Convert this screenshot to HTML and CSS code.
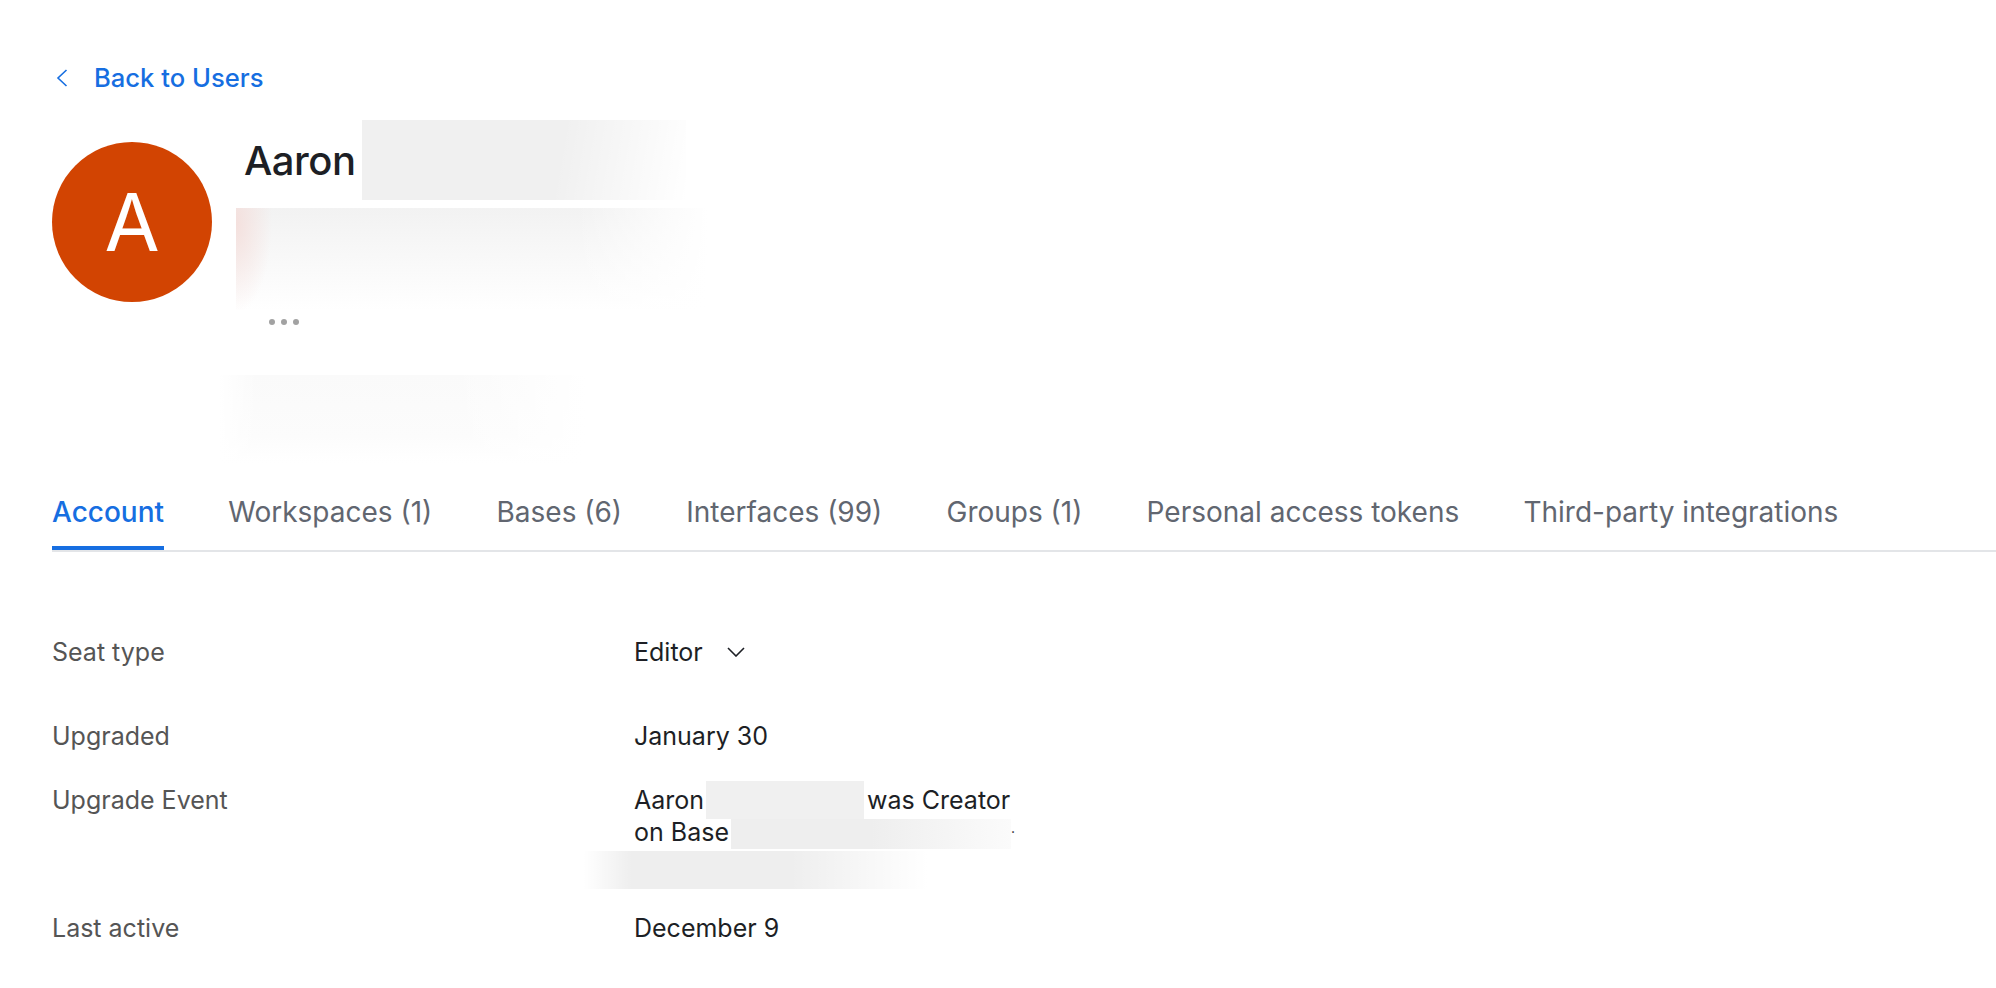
FILE: index.html
```html
<!DOCTYPE html>
<html lang="en">
<head>
<meta charset="utf-8">
<title>Aaron - Users</title>
<link rel="stylesheet" href="styles.css">
</head>
<body>
<main class="page">
  <a class="back" href="#">
    <svg class="back-icon" viewBox="0 0 12 18" width="12" height="18" aria-hidden="true"><path d="M10.5 1 2 9l8.5 8" fill="none" stroke="currentColor" stroke-width="1.6"/></svg>
    <span>Back to Users</span>
  </a>
  <header class="profile">
    <div class="avatar">A</div>
    <div class="info">
      <div class="name-row">
        <h1 class="name">Aaron</h1>
        <div class="mask mask-surname"></div>
      </div>
      <div class="mask mask-details"></div>
      <div class="dots"><i></i><i></i><i></i></div>
    </div>
  </header>
  <div class="mask mask-meta"></div>
  <nav class="tabs">
    <a class="tab active" href="#">Account</a>
    <a class="tab" href="#">Workspaces (1)</a>
    <a class="tab" href="#">Bases (6)</a>
    <a class="tab" href="#">Interfaces (99)</a>
    <a class="tab" href="#">Groups (1)</a>
    <a class="tab" href="#">Personal access tokens</a>
    <a class="tab" href="#">Third-party integrations</a>
  </nav>
  <section class="details">
    <div class="row row-seat">
      <div class="label">Seat type</div>
      <div class="value seat">Editor
        <svg class="seat-icon" viewBox="0 0 18 10" width="18" height="10" aria-hidden="true"><path d="M1 1l8 8 8-8" fill="none" stroke="currentColor" stroke-width="1.6"/></svg>
      </div>
    </div>
    <div class="row row-upgraded">
      <div class="label">Upgraded</div>
      <div class="value">January 30</div>
    </div>
    <div class="row row-event">
      <div class="label">Upgrade Event</div>
      <div class="value event">
        <div class="event-line">Aaron<span class="mask mask-person"></span>was Creator</div>
        <div class="event-line">on Base<span class="mask mask-base"></span><span class="event-dot">.</span></div>
        <div class="mask mask-extra"></div>
      </div>
    </div>
    <div class="row">
      <div class="label">Last active</div>
      <div class="value">December 9</div>
    </div>
  </section>
</main>
</body>
</html>
```

FILE: styles.css
```css
* { box-sizing: border-box; }
html, body { margin: 0; padding: 0; background: #fff; }
body {
  font-family: Inter, "Liberation Sans", sans-serif;
  color: #1d1f25;
  height: 988px;
  overflow: hidden;
}
.page { padding: 62px 0 0 52px; }

.back {
  display: flex;
  align-items: center;
  height: 32px;
  color: #166ee1;
  font-size: 25.6px;
  font-weight: 500;
  line-height: 32px;
  text-decoration: none;
}
.back-icon { margin-left: 4px; margin-right: 26px; flex: none; }

.profile { display: flex; align-items: flex-start; margin-top: 26px; height: 222px; }
.avatar {
  width: 160px;
  height: 160px;
  margin-top: 22px;
  border-radius: 50%;
  background: #d24402;
  color: #fff;
  font-size: 80px;
  font-weight: 400;
  line-height: 160px;
  text-align: center;
  flex: none;
}
.info { margin-left: 24px; }
.name-row { display: flex; height: 80px; }
.name {
  margin: 0;
  padding: 1px 0 0 8px;
  font-size: 40px;
  font-weight: 500;
  line-height: 80px;
  letter-spacing: -0.5px;
  width: 126px;
}
.mask-surname {
  width: 324px;
  height: 80px;
  background:
    linear-gradient(100deg, rgba(255,255,255,0) 60%, #fff 100%),
    #f0f0f0;
}
.mask-details {
  width: 472px;
  height: 102px;
  margin-top: 8px;
  background:
    radial-gradient(ellipse 36px 90px at 0 15%, rgba(244,222,219,.9) 0, rgba(255,255,255,0) 100%),
    linear-gradient(90deg, rgba(255,255,255,0) 72%, #fff 100%),
    linear-gradient(180deg, #f2f2f2 0, #fdfdfd 85%, #fff 100%);
}
.dots { display: flex; gap: 6px; margin: 9px 0 0 33px; }
.dots i { width: 6px; height: 6px; border-radius: 50%; background: #a2a2a2; }

.mask-meta {
  width: 386px;
  height: 88px;
  margin: 33px 0 0 167px;
  background:
    linear-gradient(90deg, #fff 0, rgba(255,255,255,0) 10%, rgba(255,255,255,0) 60%, #fff 95%),
    linear-gradient(180deg, #fafafa 0, #fcfcfc 70%, #fff 100%);
}

.tabs {
  display: flex;
  gap: 64.2px;
  height: 89px;
  border-bottom: 2px solid #e3e5e8;
}
.tab {
  height: 87px;
  padding-top: 31px;
  color: #616670;
  font-size: 28px;
  font-weight: 400;
  line-height: 36px;
  text-decoration: none;
  white-space: nowrap;
}
.tab.active {
  color: #166ee1;
  font-weight: 500;
  border-bottom: 4px solid #166ee1;
}

.details { margin-top: 84px; font-size: 25px; line-height: 32px; }
.row { display: flex; }
.row-seat { margin-bottom: 52px; }
.row-upgraded { margin-bottom: 32px; }
.row-event { margin-bottom: 23px; }
.label { width: 582px; color: #555; flex: none; }
.value { color: #1d1f25; }
.seat { display: flex; align-items: center; }
.seat-icon { margin-left: 24px; }
.event { width: 400px; }
.event-line { display: flex; height: 32px; align-items: center; white-space: nowrap; }
.mask-person {
  align-self: flex-start;
  width: 158px;
  height: 38px;
  margin: -3px 3px 0 2px;
  background: #f0f0f0;
}
.mask-base {
  align-self: flex-start;
  width: 280px;
  height: 30px;
  margin: 3px 0 0 2px;
  background: linear-gradient(90deg, #eeeeee 0, #eeeeee 50%, #fbfbfb 100%);
}
.mask-extra {
  width: 343px;
  height: 38px;
  margin: 3px 0 0 -50px;
  background:
    linear-gradient(90deg, #fff 0, rgba(255,255,255,0) 14%, rgba(255,255,255,0) 60%, #fff 100%),
    #eeeeee;
}
.event-dot { margin-top: -8px; font-size: 14px; }
```
